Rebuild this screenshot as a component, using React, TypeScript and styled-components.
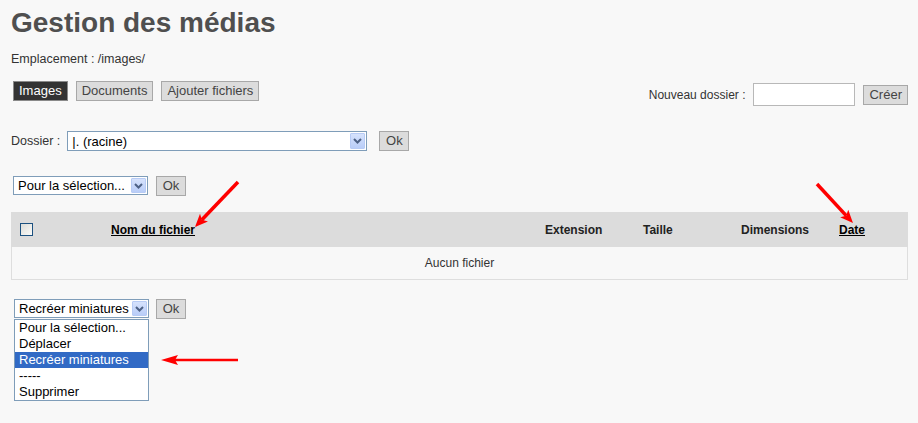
import React from "react";
import styled, { createGlobalStyle } from "styled-components";

const GlobalStyle = createGlobalStyle`
  html, body {
    margin: 0;
    padding: 0;
    background-color: #f8f8f8;
  }
  body {
    font-family: "Liberation Sans", Arial, sans-serif;
    color: #333;
  }
`;

const Page = styled.div`
  position: relative;
  width: 918px;
  height: 423px;
  box-sizing: border-box;
  padding: 7px 10px 0 11px;
  overflow: hidden;
`;

const Title = styled.h1`
  margin: 0;
  font-size: 28px;
  line-height: 32px;
  font-weight: bold;
  color: #4f4f4f;
`;

const Location = styled.p`
  margin: 12px 0 0;
  font-size: 12.5px;
  line-height: 16px;
  color: #333;
`;

const Toolbar = styled.div`
  display: flex;
  justify-content: space-between;
  align-items: flex-start;
  margin-top: 14px;
  height: 25px;
`;

const Tabs = styled.div`
  display: flex;
  gap: 8px;
  padding-left: 2px;
`;

const Button = styled.button<{ $active?: boolean }>`
  box-sizing: border-box;
  height: 20px;
  min-width: 30px;
  padding: 0 5px;
  border: 1px solid ${({ $active }) => ($active ? "#8a8a8a" : "#a8a8a8")};
  background: ${({ $active }) => ($active ? "#333" : "#dcdcdc")};
  color: ${({ $active }) => ($active ? "#fff" : "#444")};
  font-family: "Liberation Sans", Arial, sans-serif;
  font-size: 13px;
  line-height: 18px;
  border-radius: 0;
  cursor: pointer;
`;

const NewFolder = styled.div`
  display: flex;
  align-items: center;
  gap: 8px;
  margin-top: 2px;
`;

const Label = styled.span`
  font-size: 12px;
  color: #333;
`;

const TextInput = styled.input`
  box-sizing: border-box;
  width: 102px;
  height: 23px;
  border: 1px solid #b8b8b8;
  background: #fff;
  padding: 2px 4px;
  outline: none;
`;

const ControlRow = styled.div<{ $top: number; $gap: number; $indent?: number }>`
  position: relative;
  display: flex;
  align-items: flex-start;
  gap: ${({ $gap }) => $gap}px;
  margin-top: ${({ $top }) => $top}px;
  padding-left: ${({ $indent }) => $indent ?? 0}px;
`;

const FieldLabel = styled.span`
  font-size: 12.5px;
  line-height: 20px;
  color: #333;
`;

const SelectBox = styled.div<{ $width: number; $height: number }>`
  position: relative;
  box-sizing: border-box;
  width: ${({ $width }) => $width}px;
  height: ${({ $height }) => $height}px;
  border: 1px solid #7f9db9;
  background: #fff;
  display: flex;
  align-items: center;
  padding: 0 18px 0 4px;
  font-size: 13px;
  color: #000;
  white-space: nowrap;
`;

const SelectArrow = styled.span`
  position: absolute;
  right: 1px;
  top: 1px;
  bottom: 1px;
  width: 15px;
  box-sizing: border-box;
  border: 1px solid #b7cbf5;
  border-radius: 1px;
  background: linear-gradient(180deg, #d6e2fc 0%, #b9cdf8 100%);
  display: flex;
  align-items: center;
  justify-content: center;
`;

const SelectWrap = styled.div`
  position: relative;
`;

const OptionList = styled.ul`
  position: absolute;
  top: 100%;
  left: 0;
  width: 135px;
  box-sizing: border-box;
  margin: 1px 0 0;
  padding: 0;
  list-style: none;
  background: #fff;
  border: 1px solid #7f9db9;
  z-index: 2;
`;

const Option = styled.li<{ $selected?: boolean }>`
  height: 16px;
  line-height: 16px;
  padding-left: 4px;
  font-size: 13px;
  color: ${({ $selected }) => ($selected ? "#fff" : "#000")};
  background: ${({ $selected }) => ($selected ? "#316ac5" : "transparent")};
  white-space: nowrap;
`;

const Table = styled.div`
  margin-top: 16px;
  width: 897px;
`;

const HeaderRow = styled.div`
  display: grid;
  grid-template-columns: 100px 434px 98px 98px 98px 1fr;
  align-items: center;
  height: 35px;
  background: #dcdcdc;
`;

const HeaderCell = styled.div<{ $link?: boolean }>`
  font-size: 12px;
  font-weight: bold;
  color: ${({ $link }) => ($link ? "#000" : "#222")};
  text-decoration: ${({ $link }) => ($link ? "underline" : "none")};
  padding-top: 1px;
`;

const CheckCell = styled.div`
  padding-left: 9px;
  display: flex;
  align-items: center;
`;

const CheckBox = styled.span`
  display: inline-block;
  box-sizing: border-box;
  width: 13px;
  height: 13px;
  border: 1px solid #1c5180;
  background: linear-gradient(135deg, #dcdcd7 0%, #fbfbf9 100%);
`;

const EmptyRow = styled.div`
  height: 32px;
  border: 1px solid #dedede;
  border-top: none;
  display: flex;
  align-items: center;
  justify-content: center;
  font-size: 12px;
  color: #333;
`;

const Annotations = styled.svg`
  position: absolute;
  left: 0;
  top: 0;
  pointer-events: none;
`;

function Chevron() {
  return (
    <svg width="9" height="6" viewBox="0 0 9 6">
      <path d="M1 1 L4.5 4.5 L8 1" fill="none" stroke="#4d6185" strokeWidth="2" />
    </svg>
  );
}

function Select({ width, height, value }: { width: number; height: number; value: string }) {
  return (
    <SelectBox $width={width} $height={height}>
      {value}
      <SelectArrow>
        <Chevron />
      </SelectArrow>
    </SelectBox>
  );
}

function Arrow({ x1, y1, x2, y2, w = 3.5, head = 13, spread = 5.5 }: { x1: number; y1: number; x2: number; y2: number; w?: number; head?: number; spread?: number }) {
  const dx = x2 - x1;
  const dy = y2 - y1;
  const len = Math.sqrt(dx * dx + dy * dy);
  const ux = dx / len;
  const uy = dy / len;
  const bx = x2 - ux * head;
  const by = y2 - uy * head;
  const px = -uy * spread;
  const py = ux * spread;
  const pts = `${x2},${y2} ${bx + px},${by + py} ${bx + ux * 3},${by + uy * 3} ${bx - px},${by - py}`;
  return (
    <g>
      <line x1={x1} y1={y1} x2={bx + ux * 3} y2={by + uy * 3} stroke="#ff0000" strokeWidth={w} />
      <polygon points={pts} fill="#ff0000" />
    </g>
  );
}

const actions = ["Pour la sélection...", "Déplacer", "Recréer miniatures", "-----", "Supprimer"];

export default function App() {
  return (
    <>
      <GlobalStyle />
      <Page>
        <Title>Gestion des médias</Title>
        <Location>Emplacement : /images/</Location>

        <Toolbar>
          <Tabs>
            <Button $active>Images</Button>
            <Button>Documents</Button>
            <Button>Ajouter fichiers</Button>
          </Tabs>
          <NewFolder>
            <Label>Nouveau dossier :</Label>
            <TextInput type="text" />
            <Button>Créer</Button>
          </NewFolder>
        </Toolbar>

        <ControlRow $top={25} $gap={7}>
          <FieldLabel>Dossier :</FieldLabel>
          <Select width={300} height={20} value="|. (racine)" />
          <Button style={{ marginLeft: 5 }}>Ok</Button>
        </ControlRow>

        <ControlRow $top={25} $gap={8} $indent={2}>
          <Select width={135} height={19} value="Pour la sélection..." />
          <Button>Ok</Button>
        </ControlRow>

        <Table>
          <HeaderRow>
            <CheckCell>
              <CheckBox />
            </CheckCell>
            <HeaderCell $link>Nom du fichier</HeaderCell>
            <HeaderCell>Extension</HeaderCell>
            <HeaderCell>Taille</HeaderCell>
            <HeaderCell>Dimensions</HeaderCell>
            <HeaderCell $link>Date</HeaderCell>
          </HeaderRow>
          <EmptyRow>Aucun fichier</EmptyRow>
        </Table>

        <ControlRow $top={19} $gap={7} $indent={3}>
          <SelectWrap>
            <Select width={135} height={19} value="Recréer miniatures" />
            <OptionList>
              {actions.map((a) => (
                <Option key={a} $selected={a === "Recréer miniatures"}>
                  {a}
                </Option>
              ))}
            </OptionList>
          </SelectWrap>
          <Button>Ok</Button>
        </ControlRow>

        <Annotations width="918" height="423">
          <Arrow x1={238} y1={182} x2={195} y2={227} />
          <Arrow x1={817} y1={184} x2={853} y2={223} />
          <Arrow x1={238} y1={360} x2={161} y2={360} w={2.5} head={17} spread={5} />
        </Annotations>
      </Page>
    </>
  );
}
